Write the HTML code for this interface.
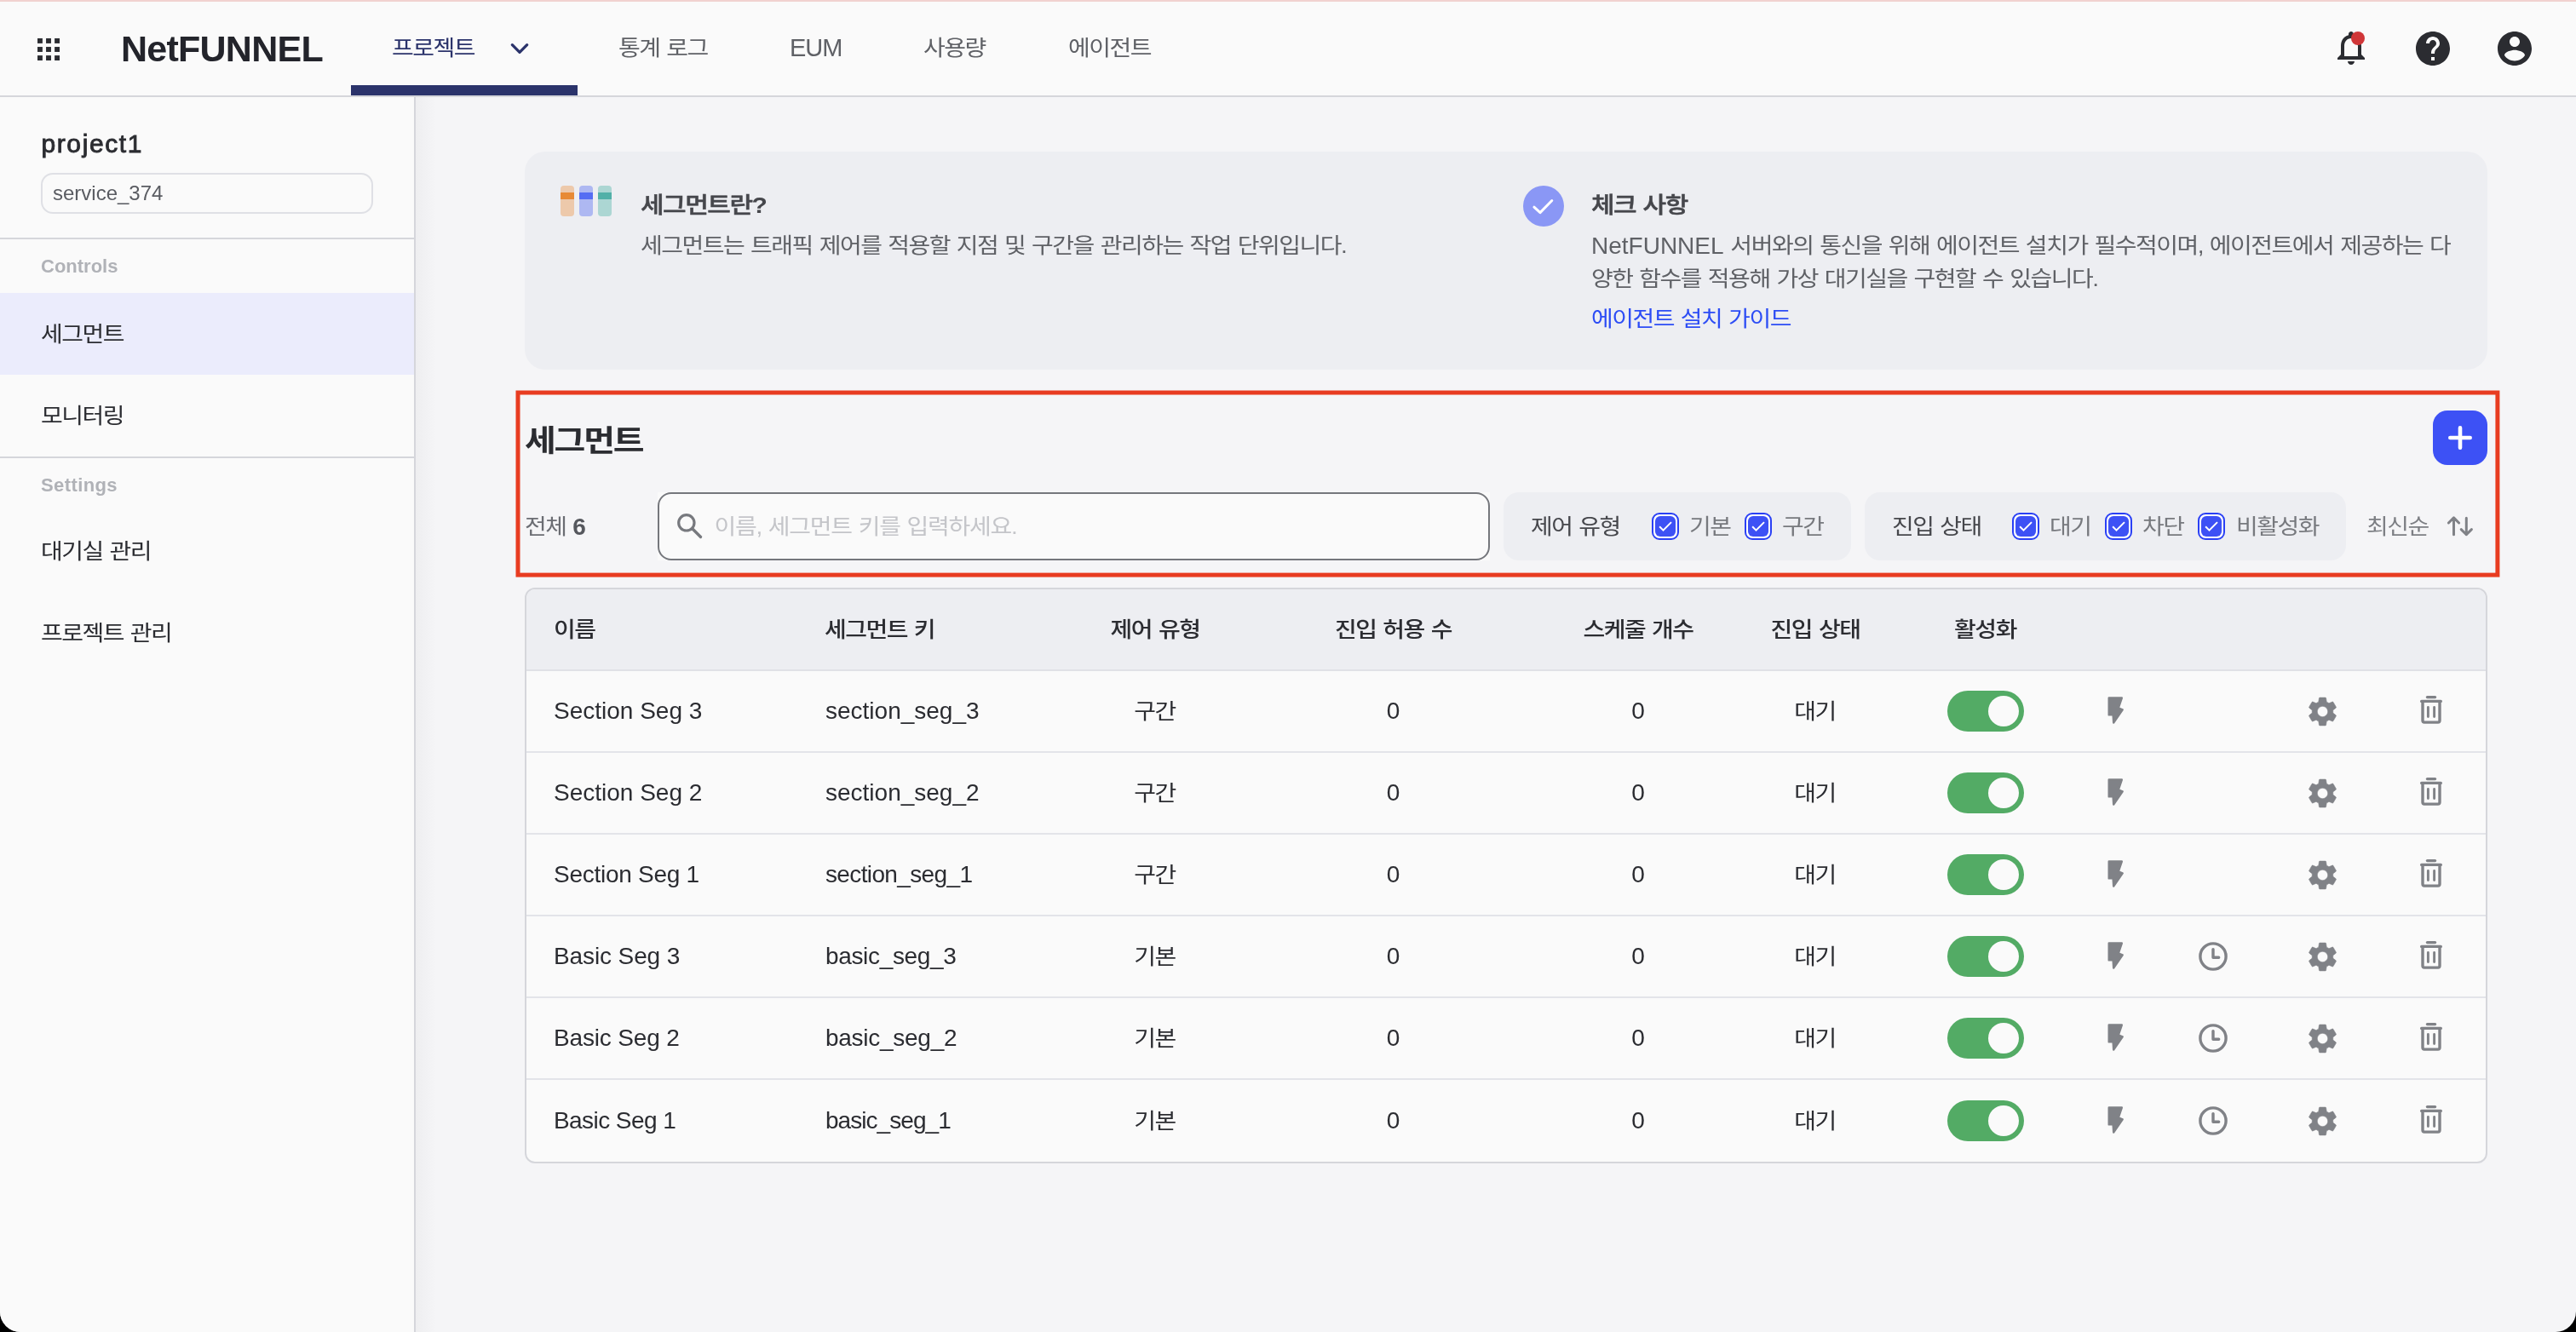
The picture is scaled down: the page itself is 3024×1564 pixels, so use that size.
<!DOCTYPE html>
<html lang="ko"><head><meta charset="utf-8"><title>NetFUNNEL - 세그먼트</title>
<style>
html,body{margin:0;padding:0;background:#000}
body{width:3024px;height:1564px;overflow:hidden;position:relative;background:#000;font-family:"Liberation Sans","Noto Sans CJK KR",sans-serif;-webkit-font-smoothing:antialiased}
.a{position:absolute}
.t{position:absolute;white-space:nowrap}
.k{transform:scaleY(.89);transform-origin:50% 50%}
.l{display:inline-block;transform:scaleY(1.1236);letter-spacing:0}
svg{position:absolute;display:block;overflow:visible}
@media (max-width:1600px){body{zoom:.5}}
#root{position:absolute;left:0;top:0;width:3024px;height:1564px;will-change:transform;background:#f5f5f7;border-radius:0 0 24px 24px;overflow:hidden}
</style></head><body><div id="root">

<div class="a" style="left:488px;top:114px;width:24px;height:1450px;background:linear-gradient(to right,#eeeef0,#f5f5f7)"></div>
<div class="a" style="left:0;top:0;width:3024px;height:112px;background:#fafafa;border-bottom:2px solid #d5d6db"></div>
<div class="a" style="left:0;top:0;width:3024px;height:2px;background:#f1d2d0"></div>
<svg style="left:44px;top:45px" width="26" height="26" viewBox="0 0 26 26"><rect x="0.0" y="0.0" width="5.9" height="5.9" fill="#2b2c31"/><rect x="10.05" y="0.0" width="5.9" height="5.9" fill="#2b2c31"/><rect x="20.1" y="0.0" width="5.9" height="5.9" fill="#2b2c31"/><rect x="0.0" y="10.05" width="5.9" height="5.9" fill="#2b2c31"/><rect x="10.05" y="10.05" width="5.9" height="5.9" fill="#2b2c31"/><rect x="20.1" y="10.05" width="5.9" height="5.9" fill="#2b2c31"/><rect x="0.0" y="20.1" width="5.9" height="5.9" fill="#2b2c31"/><rect x="10.05" y="20.1" width="5.9" height="5.9" fill="#2b2c31"/><rect x="20.1" y="20.1" width="5.9" height="5.9" fill="#2b2c31"/></svg>
<div class="t " style="left:142px;top:27.0px;font-size:43px;line-height:60px;color:#23242b;font-weight:700;letter-spacing:-0.75px;">NetFUNNEL</div>
<div class="t  k" style="left:460px;top:36.0px;font-size:28px;line-height:42px;color:#2b336b;font-weight:400;letter-spacing:-1.5px;">프로젝트</div>
<svg style="left:590px;top:37px" width="40" height="40" viewBox="0 0 24 24"><path fill="none" stroke="#2b336b" stroke-width="2" stroke-linecap="round" stroke-linejoin="round" d="M6.8 9.4 12 14.6l5.2-5.2"/></svg>
<div class="a" style="left:412px;top:100px;width:266px;height:12px;background:#2b336b"></div>
<div class="t  k" style="left:726px;top:36.0px;font-size:28px;line-height:42px;color:#5f6166;font-weight:400;letter-spacing:-1.5px;word-spacing:1.5px;">통계 로그</div>
<div class="t " style="left:927px;top:34.5px;font-size:29px;line-height:43px;color:#5f6166;font-weight:400;letter-spacing:-1px;">EUM</div>
<div class="t  k" style="left:1084px;top:36.0px;font-size:28px;line-height:42px;color:#5f6166;font-weight:400;letter-spacing:-1.5px;">사용량</div>
<div class="t  k" style="left:1254px;top:36.0px;font-size:28px;line-height:42px;color:#5f6166;font-weight:400;letter-spacing:-1.5px;">에이전트</div>
<svg style="left:2736px;top:32px" width="48" height="48" viewBox="0 0 24 24"><path fill="#2b2c31" d="M12 22c1.1 0 2-.9 2-2h-4c0 1.1.9 2 2 2zm6-6v-5c0-3.07-1.63-5.64-4.5-6.32V4c0-.83-.67-1.5-1.5-1.5s-1.5.67-1.5 1.5v.68C7.64 5.36 6 7.92 6 11v5l-2 2v1h16v-1l-2-2zm-2 1H8v-6c0-2.48 1.51-4.5 4-4.5s4 2.02 4 4.5v6z"/></svg>
<div class="a" style="left:2760px;top:37px;width:16px;height:16px;border-radius:50%;background:#d03638"></div>
<svg style="left:2832px;top:33px" width="48" height="48" viewBox="0 0 24 24"><path fill="#2b2c31" d="M12 2C6.48 2 2 6.48 2 12s4.48 10 10 10 10-4.48 10-10S17.52 2 12 2zm1 17h-2v-2h2v2zm2.07-7.75l-.9.92C13.45 12.9 13 13.5 13 15h-2v-.5c0-1.1.45-2.1 1.17-2.83l1.24-1.26c.37-.36.59-.86.59-1.41 0-1.1-.9-2-2-2s-2 .9-2 2H8c0-2.21 1.79-4 4-4s4 1.79 4 4c0 .88-.36 1.68-.93 2.25z"/></svg>
<svg style="left:2928px;top:33px" width="48" height="48" viewBox="0 0 24 24"><path fill="#2b2c31" d="M12 2C6.48 2 2 6.48 2 12s4.48 10 10 10 10-4.48 10-10S17.52 2 12 2zm0 3c1.66 0 3 1.34 3 3s-1.34 3-3 3-3-1.34-3-3 1.34-3 3-3zm0 14.2c-2.5 0-4.71-1.28-6-3.22.03-1.99 4-3.08 6-3.08 1.99 0 5.97 1.09 6 3.08-1.29 1.94-3.5 3.22-6 3.22z"/></svg>
<div class="a" style="left:0;top:114px;width:486px;height:1450px;background:#fafafa;border-right:2px solid #d5d6db"></div>
<div class="t " style="left:48.5px;top:147.0px;font-size:30px;line-height:44px;color:#2b2c31;font-weight:400;letter-spacing:1.6px;-webkit-text-stroke:.9px #2b2c31;">project1</div>
<div class="a" style="left:48px;top:203px;width:386px;height:44px;border:2px solid #dfe0e5;border-radius:14px;background:#fafafa"></div>
<div class="t " style="left:62px;top:209.0px;font-size:24px;line-height:36px;color:#5a5c62;font-weight:400;">service_374</div>
<div class="a" style="left:0;top:279px;width:486px;height:2px;background:#d5d6db"></div>
<div class="t " style="left:48px;top:297.0px;font-size:22px;line-height:32px;color:#b0b2b7;font-weight:700;">Controls</div>
<div class="a" style="left:0;top:344px;width:486px;height:96px;background:#ebecfc"></div>
<div class="t  k" style="left:48px;top:372.0px;font-size:28px;line-height:42px;color:#2b2c31;font-weight:400;letter-spacing:-1.5px;">세그먼트</div>
<div class="t  k" style="left:48px;top:468.0px;font-size:28px;line-height:42px;color:#2b2c31;font-weight:400;letter-spacing:-1.5px;">모니터링</div>
<div class="a" style="left:0;top:536px;width:486px;height:2px;background:#d5d6db"></div>
<div class="t " style="left:48px;top:554.0px;font-size:22px;line-height:32px;color:#b0b2b7;font-weight:700;letter-spacing:0.4px;">Settings</div>
<div class="t  k" style="left:48px;top:627.0px;font-size:28px;line-height:42px;color:#2b2c31;font-weight:400;letter-spacing:-1.5px;word-spacing:1.5px;">대기실 관리</div>
<div class="t  k" style="left:48px;top:723.0px;font-size:28px;line-height:42px;color:#2b2c31;font-weight:400;letter-spacing:-1.5px;word-spacing:1.5px;">프로젝트 관리</div>
<div class="a" style="left:616px;top:178px;width:2304px;height:256px;background:#edeef2;border-radius:24px"></div>
<div class="a" style="left:658px;top:218px;width:16px;height:36px;border-radius:4px;background:#edc9ab;overflow:hidden"><div class="a" style="left:0;top:8px;width:16px;height:8px;background:#e78a35"></div></div>
<div class="a" style="left:680px;top:218px;width:16px;height:36px;border-radius:4px;background:#aeb8f2;overflow:hidden"><div class="a" style="left:0;top:8px;width:16px;height:8px;background:#556df3"></div></div>
<div class="a" style="left:702px;top:218px;width:16px;height:36px;border-radius:4px;background:#acd6d3;overflow:hidden"><div class="a" style="left:0;top:8px;width:16px;height:8px;background:#52b0a8"></div></div>
<div class="t  k" style="left:752px;top:217.5px;font-size:30px;line-height:45px;color:#46474c;font-weight:500;letter-spacing:-1.5px;-webkit-text-stroke:.55px #46474c;">세그먼트란<b style="-webkit-text-stroke:0">?</b></div>
<div class="t  k" style="left:752px;top:268.0px;font-size:28px;line-height:42px;color:#5f6166;font-weight:400;letter-spacing:-1.5px;word-spacing:1.5px;">세그먼트는 트래픽 제어를 적용할 지점 및 구간을 관리하는 작업 단위입니다.</div>
<div class="a" style="left:1788px;top:218px;width:48px;height:48px;border-radius:50%;background:#8a97f5"></div>
<svg style="left:1788px;top:218px" width="48" height="48" viewBox="0 0 48 48"><path fill="none" stroke="#fff" stroke-width="3" stroke-linecap="round" stroke-linejoin="round" d="M12.9 25.2l7.1 6.4L33.8 17.5"/></svg>
<div class="t  k" style="left:1868px;top:217.5px;font-size:30px;line-height:45px;color:#46474c;font-weight:500;letter-spacing:-1.5px;word-spacing:1.5px;-webkit-text-stroke:.55px #46474c;">체크 사항</div>
<div class="t  k" style="left:1868px;top:268.0px;font-size:28px;line-height:42px;color:#5f6166;font-weight:400;letter-spacing:-1.5px;word-spacing:1.5px;"><span class="l">NetFUNNEL</span> 서버와의 통신을 위해 에이전트 설치가 필수적이며, 에이전트에서 제공하는 다</div>
<div class="t  k" style="left:1868px;top:306.5px;font-size:28px;line-height:42px;color:#5f6166;font-weight:400;letter-spacing:-1.5px;word-spacing:1.5px;">양한 함수를 적용해 가상 대기실을 구현할 수 있습니다.</div>
<div class="t  k" style="left:1868px;top:353.5px;font-size:28px;line-height:42px;color:#2d4df5;font-weight:400;letter-spacing:-1.5px;word-spacing:1.5px;">에이전트 설치 가이드</div>
<svg style="left:600px;top:450px" width="2340" height="235" viewBox="600 450 2340 235"><rect x="608" y="461" width="2323.9" height="214.1" fill="none" stroke="#e83c21" stroke-width="5"/></svg>
<div class="t  k" style="left:616px;top:488.0px;font-size:40px;line-height:60px;color:#2b2c31;font-weight:700;letter-spacing:-2.2px;">세그먼트</div>
<div class="a" style="left:2856px;top:482px;width:64px;height:64px;border-radius:17px;background:#3d51f5"></div>
<svg style="left:2856px;top:482px" width="64" height="64" viewBox="0 0 64 64"><path fill="none" stroke="#fff" stroke-width="4.6" stroke-linecap="round" d="M20.3 32h23.4M32 20.3v23.4"/></svg>
<div class="t  k" style="left:616px;top:598.0px;font-size:28px;line-height:42px;color:#6b6d73;font-weight:400;letter-spacing:-1.5px;word-spacing:1.5px;">전체 <b class="l" style="color:#55575d">6</b></div>
<div class="a" style="left:772px;top:578px;width:977px;height:80px;background:#fafafa"></div>
<div class="a" style="left:772px;top:578px;width:973px;height:76px;border:2px solid #75777c;border-radius:16px;background:#fafafa"></div>
<svg style="left:790px;top:598px" width="40" height="40" viewBox="0 0 24 24"><circle cx="9.5" cy="9.5" r="5.5" fill="none" stroke="#77797e" stroke-width="1.9"/><path d="M13.8 13.8l5.7 5.7" stroke="#77797e" stroke-width="2" stroke-linecap="round"/></svg>
<div class="t  k" style="left:838.5px;top:598.0px;font-size:28px;line-height:42px;color:#c4c5c9;font-weight:400;letter-spacing:-1.25px;word-spacing:1.25px;">이름, 세그먼트 키를 입력하세요.</div>
<div class="a" style="left:1765px;top:578px;width:408px;height:80px;border-radius:18px;background:#edeef2"></div>
<div class="t  k" style="left:1797px;top:598.0px;font-size:28px;line-height:42px;color:#46474c;font-weight:400;letter-spacing:-1.5px;word-spacing:1.5px;">제어 유형</div>
<div class="a" style="left:1939px;top:602px;width:28px;height:28px;border:2px solid #2a40f5;border-radius:9px;background:#fff"></div><div class="a" style="left:1943px;top:606px;width:24px;height:24px;border-radius:6px;background:#3d51f5"></div><svg style="left:1939px;top:602px" width="32" height="32" viewBox="0 0 32 32"><path fill="none" stroke="#fff" stroke-width="2" d="M9.1 16.2l4.4 4.4L23 11.1"/></svg>
<div class="t  k" style="left:1983px;top:598.0px;font-size:28px;line-height:42px;color:#77797e;font-weight:400;letter-spacing:-1.5px;">기본</div>
<div class="a" style="left:2048px;top:602px;width:28px;height:28px;border:2px solid #2a40f5;border-radius:9px;background:#fff"></div><div class="a" style="left:2052px;top:606px;width:24px;height:24px;border-radius:6px;background:#3d51f5"></div><svg style="left:2048px;top:602px" width="32" height="32" viewBox="0 0 32 32"><path fill="none" stroke="#fff" stroke-width="2" d="M9.1 16.2l4.4 4.4L23 11.1"/></svg>
<div class="t  k" style="left:2092px;top:598.0px;font-size:28px;line-height:42px;color:#77797e;font-weight:400;letter-spacing:-1.5px;">구간</div>
<div class="a" style="left:2189px;top:578px;width:565px;height:80px;border-radius:18px;background:#edeef2"></div>
<div class="t  k" style="left:2221px;top:598.0px;font-size:28px;line-height:42px;color:#46474c;font-weight:400;letter-spacing:-1.5px;word-spacing:1.5px;">진입 상태</div>
<div class="a" style="left:2362px;top:602px;width:28px;height:28px;border:2px solid #2a40f5;border-radius:9px;background:#fff"></div><div class="a" style="left:2366px;top:606px;width:24px;height:24px;border-radius:6px;background:#3d51f5"></div><svg style="left:2362px;top:602px" width="32" height="32" viewBox="0 0 32 32"><path fill="none" stroke="#fff" stroke-width="2" d="M9.1 16.2l4.4 4.4L23 11.1"/></svg>
<div class="t  k" style="left:2406px;top:598.0px;font-size:28px;line-height:42px;color:#77797e;font-weight:400;letter-spacing:-1.5px;">대기</div>
<div class="a" style="left:2471px;top:602px;width:28px;height:28px;border:2px solid #2a40f5;border-radius:9px;background:#fff"></div><div class="a" style="left:2475px;top:606px;width:24px;height:24px;border-radius:6px;background:#3d51f5"></div><svg style="left:2471px;top:602px" width="32" height="32" viewBox="0 0 32 32"><path fill="none" stroke="#fff" stroke-width="2" d="M9.1 16.2l4.4 4.4L23 11.1"/></svg>
<div class="t  k" style="left:2515px;top:598.0px;font-size:28px;line-height:42px;color:#77797e;font-weight:400;letter-spacing:-1.5px;">차단</div>
<div class="a" style="left:2580px;top:602px;width:28px;height:28px;border:2px solid #2a40f5;border-radius:9px;background:#fff"></div><div class="a" style="left:2584px;top:606px;width:24px;height:24px;border-radius:6px;background:#3d51f5"></div><svg style="left:2580px;top:602px" width="32" height="32" viewBox="0 0 32 32"><path fill="none" stroke="#fff" stroke-width="2" d="M9.1 16.2l4.4 4.4L23 11.1"/></svg>
<div class="t  k" style="left:2625px;top:598.0px;font-size:28px;line-height:42px;color:#77797e;font-weight:400;letter-spacing:-1.5px;">비활성화</div>
<div class="t  k" style="left:2778px;top:598.0px;font-size:28px;line-height:42px;color:#7d7f84;font-weight:400;letter-spacing:-1.5px;">최신순</div>
<svg style="left:2868px;top:598px" width="40" height="40" viewBox="0 0 40 40"><path fill="none" stroke="#808287" stroke-width="3" stroke-linecap="round" stroke-linejoin="round" d="M6.4 16l6.1-6.1 6.1 6.1M12.5 9.9v19.8M21.2 23.6l6.1 6.1 6.1-6.1M27.3 29.7V10.2"/></svg>
<div class="a" style="left:616px;top:690px;width:2300px;height:672px;border:2px solid #d5d6db;border-radius:12px;background:#fafafa;overflow:hidden"><div class="a" style="left:0;top:0;width:2300px;height:94px;background:#edeef2;border-bottom:2px solid #e0e1e6"></div><div class="a" style="left:0;top:190px;width:2300px;height:2px;background:#e3e4e9"></div><div class="a" style="left:0;top:286px;width:2300px;height:2px;background:#e3e4e9"></div><div class="a" style="left:0;top:382px;width:2300px;height:2px;background:#e3e4e9"></div><div class="a" style="left:0;top:478px;width:2300px;height:2px;background:#e3e4e9"></div><div class="a" style="left:0;top:574px;width:2300px;height:2px;background:#e3e4e9"></div></div>
<div class="t  k" style="left:650px;top:719.0px;font-size:28px;line-height:42px;color:#2b2c31;font-weight:500;letter-spacing:-1.5px;">이름</div>
<div class="t  k" style="left:968px;top:719.0px;font-size:28px;line-height:42px;color:#2b2c31;font-weight:500;letter-spacing:-1.5px;word-spacing:1.5px;">세그먼트 키</div>
<div class="t  k" style="left:1056px;top:719.0px;font-size:28px;line-height:42px;color:#2b2c31;font-weight:500;letter-spacing:-1.5px;word-spacing:1.5px;width:600px;text-align:center;">제어 유형</div>
<div class="t  k" style="left:1335.5px;top:719.0px;font-size:28px;line-height:42px;color:#2b2c31;font-weight:500;letter-spacing:-1.5px;word-spacing:1.5px;width:600px;text-align:center;">진입 허용 수</div>
<div class="t  k" style="left:1623px;top:719.0px;font-size:28px;line-height:42px;color:#2b2c31;font-weight:500;letter-spacing:-1.5px;word-spacing:1.5px;width:600px;text-align:center;">스케줄 개수</div>
<div class="t  k" style="left:1831px;top:719.0px;font-size:28px;line-height:42px;color:#2b2c31;font-weight:500;letter-spacing:-1.5px;word-spacing:1.5px;width:600px;text-align:center;">진입 상태</div>
<div class="t  k" style="left:2030.5px;top:719.0px;font-size:28px;line-height:42px;color:#2b2c31;font-weight:500;letter-spacing:-1.5px;width:600px;text-align:center;">활성화</div>
<div class="t " style="left:650px;top:814.0px;font-size:28px;line-height:42px;color:#2b2c31;font-weight:400;">Section Seg 3</div>
<div class="t " style="left:969px;top:814.0px;font-size:28px;line-height:42px;color:#2b2c31;font-weight:400;">section_seg_3</div>
<div class="t  k" style="left:1055.5px;top:815.0px;font-size:28px;line-height:42px;color:#2b2c31;font-weight:400;letter-spacing:-1.5px;width:600px;text-align:center;">구간</div>
<div class="t " style="left:1335.5px;top:814.0px;font-size:28px;line-height:42px;color:#2b2c31;font-weight:400;width:600px;text-align:center;">0</div>
<div class="t " style="left:1623px;top:814.0px;font-size:28px;line-height:42px;color:#2b2c31;font-weight:400;width:600px;text-align:center;">0</div>
<div class="t  k" style="left:1830.5px;top:815.0px;font-size:28px;line-height:42px;color:#2b2c31;font-weight:400;letter-spacing:-1.5px;width:600px;text-align:center;">대기</div>
<div class="a" style="left:2286px;top:811px;width:90px;height:48px;border-radius:24px;background:#53ab65"><div class="a" style="left:48px;top:6px;width:36px;height:36px;border-radius:50%;background:#fafafa"></div></div>
<svg style="left:2474px;top:818px" width="20" height="33" viewBox="0 0 20 33"><path fill="#808287" stroke="#808287" stroke-width="2.4" stroke-linejoin="round" d="M1.7 1.5h15.1l-4 11.9 4.9 1.9L7.2 30.6l-.6-9.2H1.7z"/></svg>
<svg style="left:2705.5px;top:814.5px" width="41" height="41" viewBox="0 0 24 24"><path fill="#808287" stroke="#808287" stroke-width=".35" stroke-linejoin="round" d="M19.14 12.94c.04-.3.06-.61.06-.94 0-.32-.02-.64-.07-.94l2.03-1.58c.18-.14.23-.41.12-.61l-1.92-3.32c-.12-.22-.37-.29-.59-.22l-2.39.96c-.5-.38-1.03-.7-1.62-.94l-.36-2.54c-.04-.24-.24-.41-.48-.41h-3.84c-.24 0-.43.17-.47.41l-.36 2.54c-.59.24-1.13.57-1.62.94l-2.39-.96c-.22-.08-.47 0-.59.22L2.74 8.87c-.12.21-.08.47.12.61l2.03 1.58c-.05.3-.09.63-.09.94s.02.64.07.94l-2.03 1.58c-.18.14-.23.41-.12.61l1.92 3.32c.12.22.37.29.59.22l2.39-.96c.5.38 1.03.7 1.62.94l.36 2.54c.05.24.24.41.48.41h3.84c.24 0 .44-.17.47-.41l.36-2.54c.59-.24 1.13-.56 1.62-.94l2.39.96c.22.08.47 0 .59-.22l1.92-3.32c.12-.22.07-.47-.12-.61l-2.01-1.58zM12 15.6c-1.98 0-3.6-1.62-3.6-3.6s1.62-3.6 3.6-3.6 3.6 1.62 3.6 3.6-1.62 3.6-3.6 3.6z"/></svg>
<svg style="left:2834px;top:815px" width="40" height="40" viewBox="0 0 40 40"><g fill="none" stroke="#808287" stroke-linecap="round" stroke-linejoin="round"><path stroke-width="3.2" d="M15.4 3.6h9.2"/><path stroke-width="3.2" d="M8.6 8.4h22.8"/><path stroke-width="3.4" d="M10 9.5v21.6a2 2 0 0 0 2 2h16a2 2 0 0 0 2-2V9.5"/><path stroke-width="2.9" d="M16.4 15.4v11.2M23.6 15.4v11.2"/></g></svg>
<div class="t " style="left:650px;top:910.0px;font-size:28px;line-height:42px;color:#2b2c31;font-weight:400;">Section Seg 2</div>
<div class="t " style="left:969px;top:910.0px;font-size:28px;line-height:42px;color:#2b2c31;font-weight:400;">section_seg_2</div>
<div class="t  k" style="left:1055.5px;top:911.0px;font-size:28px;line-height:42px;color:#2b2c31;font-weight:400;letter-spacing:-1.5px;width:600px;text-align:center;">구간</div>
<div class="t " style="left:1335.5px;top:910.0px;font-size:28px;line-height:42px;color:#2b2c31;font-weight:400;width:600px;text-align:center;">0</div>
<div class="t " style="left:1623px;top:910.0px;font-size:28px;line-height:42px;color:#2b2c31;font-weight:400;width:600px;text-align:center;">0</div>
<div class="t  k" style="left:1830.5px;top:911.0px;font-size:28px;line-height:42px;color:#2b2c31;font-weight:400;letter-spacing:-1.5px;width:600px;text-align:center;">대기</div>
<div class="a" style="left:2286px;top:907px;width:90px;height:48px;border-radius:24px;background:#53ab65"><div class="a" style="left:48px;top:6px;width:36px;height:36px;border-radius:50%;background:#fafafa"></div></div>
<svg style="left:2474px;top:914px" width="20" height="33" viewBox="0 0 20 33"><path fill="#808287" stroke="#808287" stroke-width="2.4" stroke-linejoin="round" d="M1.7 1.5h15.1l-4 11.9 4.9 1.9L7.2 30.6l-.6-9.2H1.7z"/></svg>
<svg style="left:2705.5px;top:910.5px" width="41" height="41" viewBox="0 0 24 24"><path fill="#808287" stroke="#808287" stroke-width=".35" stroke-linejoin="round" d="M19.14 12.94c.04-.3.06-.61.06-.94 0-.32-.02-.64-.07-.94l2.03-1.58c.18-.14.23-.41.12-.61l-1.92-3.32c-.12-.22-.37-.29-.59-.22l-2.39.96c-.5-.38-1.03-.7-1.62-.94l-.36-2.54c-.04-.24-.24-.41-.48-.41h-3.84c-.24 0-.43.17-.47.41l-.36 2.54c-.59.24-1.13.57-1.62.94l-2.39-.96c-.22-.08-.47 0-.59.22L2.74 8.87c-.12.21-.08.47.12.61l2.03 1.58c-.05.3-.09.63-.09.94s.02.64.07.94l-2.03 1.58c-.18.14-.23.41-.12.61l1.92 3.32c.12.22.37.29.59.22l2.39-.96c.5.38 1.03.7 1.62.94l.36 2.54c.05.24.24.41.48.41h3.84c.24 0 .44-.17.47-.41l.36-2.54c.59-.24 1.13-.56 1.62-.94l2.39.96c.22.08.47 0 .59-.22l1.92-3.32c.12-.22.07-.47-.12-.61l-2.01-1.58zM12 15.6c-1.98 0-3.6-1.62-3.6-3.6s1.62-3.6 3.6-3.6 3.6 1.62 3.6 3.6-1.62 3.6-3.6 3.6z"/></svg>
<svg style="left:2834px;top:911px" width="40" height="40" viewBox="0 0 40 40"><g fill="none" stroke="#808287" stroke-linecap="round" stroke-linejoin="round"><path stroke-width="3.2" d="M15.4 3.6h9.2"/><path stroke-width="3.2" d="M8.6 8.4h22.8"/><path stroke-width="3.4" d="M10 9.5v21.6a2 2 0 0 0 2 2h16a2 2 0 0 0 2-2V9.5"/><path stroke-width="2.9" d="M16.4 15.4v11.2M23.6 15.4v11.2"/></g></svg>
<div class="t " style="left:650px;top:1006.0px;font-size:28px;line-height:42px;color:#2b2c31;font-weight:400;letter-spacing:-0.27px;">Section Seg 1</div>
<div class="t " style="left:969px;top:1006.0px;font-size:28px;line-height:42px;color:#2b2c31;font-weight:400;letter-spacing:-0.63px;">section_seg_1</div>
<div class="t  k" style="left:1055.5px;top:1007.0px;font-size:28px;line-height:42px;color:#2b2c31;font-weight:400;letter-spacing:-1.5px;width:600px;text-align:center;">구간</div>
<div class="t " style="left:1335.5px;top:1006.0px;font-size:28px;line-height:42px;color:#2b2c31;font-weight:400;width:600px;text-align:center;">0</div>
<div class="t " style="left:1623px;top:1006.0px;font-size:28px;line-height:42px;color:#2b2c31;font-weight:400;width:600px;text-align:center;">0</div>
<div class="t  k" style="left:1830.5px;top:1007.0px;font-size:28px;line-height:42px;color:#2b2c31;font-weight:400;letter-spacing:-1.5px;width:600px;text-align:center;">대기</div>
<div class="a" style="left:2286px;top:1003px;width:90px;height:48px;border-radius:24px;background:#53ab65"><div class="a" style="left:48px;top:6px;width:36px;height:36px;border-radius:50%;background:#fafafa"></div></div>
<svg style="left:2474px;top:1010px" width="20" height="33" viewBox="0 0 20 33"><path fill="#808287" stroke="#808287" stroke-width="2.4" stroke-linejoin="round" d="M1.7 1.5h15.1l-4 11.9 4.9 1.9L7.2 30.6l-.6-9.2H1.7z"/></svg>
<svg style="left:2705.5px;top:1006.5px" width="41" height="41" viewBox="0 0 24 24"><path fill="#808287" stroke="#808287" stroke-width=".35" stroke-linejoin="round" d="M19.14 12.94c.04-.3.06-.61.06-.94 0-.32-.02-.64-.07-.94l2.03-1.58c.18-.14.23-.41.12-.61l-1.92-3.32c-.12-.22-.37-.29-.59-.22l-2.39.96c-.5-.38-1.03-.7-1.62-.94l-.36-2.54c-.04-.24-.24-.41-.48-.41h-3.84c-.24 0-.43.17-.47.41l-.36 2.54c-.59.24-1.13.57-1.62.94l-2.39-.96c-.22-.08-.47 0-.59.22L2.74 8.87c-.12.21-.08.47.12.61l2.03 1.58c-.05.3-.09.63-.09.94s.02.64.07.94l-2.03 1.58c-.18.14-.23.41-.12.61l1.92 3.32c.12.22.37.29.59.22l2.39-.96c.5.38 1.03.7 1.62.94l.36 2.54c.05.24.24.41.48.41h3.84c.24 0 .44-.17.47-.41l.36-2.54c.59-.24 1.13-.56 1.62-.94l2.39.96c.22.08.47 0 .59-.22l1.92-3.32c.12-.22.07-.47-.12-.61l-2.01-1.58zM12 15.6c-1.98 0-3.6-1.62-3.6-3.6s1.62-3.6 3.6-3.6 3.6 1.62 3.6 3.6-1.62 3.6-3.6 3.6z"/></svg>
<svg style="left:2834px;top:1007px" width="40" height="40" viewBox="0 0 40 40"><g fill="none" stroke="#808287" stroke-linecap="round" stroke-linejoin="round"><path stroke-width="3.2" d="M15.4 3.6h9.2"/><path stroke-width="3.2" d="M8.6 8.4h22.8"/><path stroke-width="3.4" d="M10 9.5v21.6a2 2 0 0 0 2 2h16a2 2 0 0 0 2-2V9.5"/><path stroke-width="2.9" d="M16.4 15.4v11.2M23.6 15.4v11.2"/></g></svg>
<div class="t " style="left:650px;top:1102.0px;font-size:28px;line-height:42px;color:#2b2c31;font-weight:400;letter-spacing:-0.11px;">Basic Seg 3</div>
<div class="t " style="left:969px;top:1102.0px;font-size:28px;line-height:42px;color:#2b2c31;font-weight:400;letter-spacing:-0.34px;">basic_seg_3</div>
<div class="t  k" style="left:1055.5px;top:1103.0px;font-size:28px;line-height:42px;color:#2b2c31;font-weight:400;letter-spacing:-1.5px;width:600px;text-align:center;">기본</div>
<div class="t " style="left:1335.5px;top:1102.0px;font-size:28px;line-height:42px;color:#2b2c31;font-weight:400;width:600px;text-align:center;">0</div>
<div class="t " style="left:1623px;top:1102.0px;font-size:28px;line-height:42px;color:#2b2c31;font-weight:400;width:600px;text-align:center;">0</div>
<div class="t  k" style="left:1830.5px;top:1103.0px;font-size:28px;line-height:42px;color:#2b2c31;font-weight:400;letter-spacing:-1.5px;width:600px;text-align:center;">대기</div>
<div class="a" style="left:2286px;top:1099px;width:90px;height:48px;border-radius:24px;background:#53ab65"><div class="a" style="left:48px;top:6px;width:36px;height:36px;border-radius:50%;background:#fafafa"></div></div>
<svg style="left:2474px;top:1106px" width="20" height="33" viewBox="0 0 20 33"><path fill="#808287" stroke="#808287" stroke-width="2.4" stroke-linejoin="round" d="M1.7 1.5h15.1l-4 11.9 4.9 1.9L7.2 30.6l-.6-9.2H1.7z"/></svg>
<svg style="left:2578px;top:1103px" width="40" height="40" viewBox="0 0 40 40"><circle cx="20" cy="20" r="15.1" fill="none" stroke="#808287" stroke-width="3.4"/><path fill="none" stroke="#808287" stroke-width="3.4" stroke-linecap="round" stroke-linejoin="round" d="M20 11.6V21.3h6.7"/></svg>
<svg style="left:2705.5px;top:1102.5px" width="41" height="41" viewBox="0 0 24 24"><path fill="#808287" stroke="#808287" stroke-width=".35" stroke-linejoin="round" d="M19.14 12.94c.04-.3.06-.61.06-.94 0-.32-.02-.64-.07-.94l2.03-1.58c.18-.14.23-.41.12-.61l-1.92-3.32c-.12-.22-.37-.29-.59-.22l-2.39.96c-.5-.38-1.03-.7-1.62-.94l-.36-2.54c-.04-.24-.24-.41-.48-.41h-3.84c-.24 0-.43.17-.47.41l-.36 2.54c-.59.24-1.13.57-1.62.94l-2.39-.96c-.22-.08-.47 0-.59.22L2.74 8.87c-.12.21-.08.47.12.61l2.03 1.58c-.05.3-.09.63-.09.94s.02.64.07.94l-2.03 1.58c-.18.14-.23.41-.12.61l1.92 3.32c.12.22.37.29.59.22l2.39-.96c.5.38 1.03.7 1.62.94l.36 2.54c.05.24.24.41.48.41h3.84c.24 0 .44-.17.47-.41l.36-2.54c.59-.24 1.13-.56 1.62-.94l2.39.96c.22.08.47 0 .59-.22l1.92-3.32c.12-.22.07-.47-.12-.61l-2.01-1.58zM12 15.6c-1.98 0-3.6-1.62-3.6-3.6s1.62-3.6 3.6-3.6 3.6 1.62 3.6 3.6-1.62 3.6-3.6 3.6z"/></svg>
<svg style="left:2834px;top:1103px" width="40" height="40" viewBox="0 0 40 40"><g fill="none" stroke="#808287" stroke-linecap="round" stroke-linejoin="round"><path stroke-width="3.2" d="M15.4 3.6h9.2"/><path stroke-width="3.2" d="M8.6 8.4h22.8"/><path stroke-width="3.4" d="M10 9.5v21.6a2 2 0 0 0 2 2h16a2 2 0 0 0 2-2V9.5"/><path stroke-width="2.9" d="M16.4 15.4v11.2M23.6 15.4v11.2"/></g></svg>
<div class="t " style="left:650px;top:1198.0px;font-size:28px;line-height:42px;color:#2b2c31;font-weight:400;letter-spacing:-0.15px;">Basic Seg 2</div>
<div class="t " style="left:969px;top:1198.0px;font-size:28px;line-height:42px;color:#2b2c31;font-weight:400;letter-spacing:-0.27px;">basic_seg_2</div>
<div class="t  k" style="left:1055.5px;top:1199.0px;font-size:28px;line-height:42px;color:#2b2c31;font-weight:400;letter-spacing:-1.5px;width:600px;text-align:center;">기본</div>
<div class="t " style="left:1335.5px;top:1198.0px;font-size:28px;line-height:42px;color:#2b2c31;font-weight:400;width:600px;text-align:center;">0</div>
<div class="t " style="left:1623px;top:1198.0px;font-size:28px;line-height:42px;color:#2b2c31;font-weight:400;width:600px;text-align:center;">0</div>
<div class="t  k" style="left:1830.5px;top:1199.0px;font-size:28px;line-height:42px;color:#2b2c31;font-weight:400;letter-spacing:-1.5px;width:600px;text-align:center;">대기</div>
<div class="a" style="left:2286px;top:1195px;width:90px;height:48px;border-radius:24px;background:#53ab65"><div class="a" style="left:48px;top:6px;width:36px;height:36px;border-radius:50%;background:#fafafa"></div></div>
<svg style="left:2474px;top:1202px" width="20" height="33" viewBox="0 0 20 33"><path fill="#808287" stroke="#808287" stroke-width="2.4" stroke-linejoin="round" d="M1.7 1.5h15.1l-4 11.9 4.9 1.9L7.2 30.6l-.6-9.2H1.7z"/></svg>
<svg style="left:2578px;top:1199px" width="40" height="40" viewBox="0 0 40 40"><circle cx="20" cy="20" r="15.1" fill="none" stroke="#808287" stroke-width="3.4"/><path fill="none" stroke="#808287" stroke-width="3.4" stroke-linecap="round" stroke-linejoin="round" d="M20 11.6V21.3h6.7"/></svg>
<svg style="left:2705.5px;top:1198.5px" width="41" height="41" viewBox="0 0 24 24"><path fill="#808287" stroke="#808287" stroke-width=".35" stroke-linejoin="round" d="M19.14 12.94c.04-.3.06-.61.06-.94 0-.32-.02-.64-.07-.94l2.03-1.58c.18-.14.23-.41.12-.61l-1.92-3.32c-.12-.22-.37-.29-.59-.22l-2.39.96c-.5-.38-1.03-.7-1.62-.94l-.36-2.54c-.04-.24-.24-.41-.48-.41h-3.84c-.24 0-.43.17-.47.41l-.36 2.54c-.59.24-1.13.57-1.62.94l-2.39-.96c-.22-.08-.47 0-.59.22L2.74 8.87c-.12.21-.08.47.12.61l2.03 1.58c-.05.3-.09.63-.09.94s.02.64.07.94l-2.03 1.58c-.18.14-.23.41-.12.61l1.92 3.32c.12.22.37.29.59.22l2.39-.96c.5.38 1.03.7 1.62.94l.36 2.54c.05.24.24.41.48.41h3.84c.24 0 .44-.17.47-.41l.36-2.54c.59-.24 1.13-.56 1.62-.94l2.39.96c.22.08.47 0 .59-.22l1.92-3.32c.12-.22.07-.47-.12-.61l-2.01-1.58zM12 15.6c-1.98 0-3.6-1.62-3.6-3.6s1.62-3.6 3.6-3.6 3.6 1.62 3.6 3.6-1.62 3.6-3.6 3.6z"/></svg>
<svg style="left:2834px;top:1199px" width="40" height="40" viewBox="0 0 40 40"><g fill="none" stroke="#808287" stroke-linecap="round" stroke-linejoin="round"><path stroke-width="3.2" d="M15.4 3.6h9.2"/><path stroke-width="3.2" d="M8.6 8.4h22.8"/><path stroke-width="3.4" d="M10 9.5v21.6a2 2 0 0 0 2 2h16a2 2 0 0 0 2-2V9.5"/><path stroke-width="2.9" d="M16.4 15.4v11.2M23.6 15.4v11.2"/></g></svg>
<div class="t " style="left:650px;top:1295.0px;font-size:28px;line-height:42px;color:#2b2c31;font-weight:400;letter-spacing:-0.57px;">Basic Seg 1</div>
<div class="t " style="left:969px;top:1295.0px;font-size:28px;line-height:42px;color:#2b2c31;font-weight:400;letter-spacing:-0.95px;">basic_seg_1</div>
<div class="t  k" style="left:1055.5px;top:1296.0px;font-size:28px;line-height:42px;color:#2b2c31;font-weight:400;letter-spacing:-1.5px;width:600px;text-align:center;">기본</div>
<div class="t " style="left:1335.5px;top:1295.0px;font-size:28px;line-height:42px;color:#2b2c31;font-weight:400;width:600px;text-align:center;">0</div>
<div class="t " style="left:1623px;top:1295.0px;font-size:28px;line-height:42px;color:#2b2c31;font-weight:400;width:600px;text-align:center;">0</div>
<div class="t  k" style="left:1830.5px;top:1296.0px;font-size:28px;line-height:42px;color:#2b2c31;font-weight:400;letter-spacing:-1.5px;width:600px;text-align:center;">대기</div>
<div class="a" style="left:2286px;top:1292px;width:90px;height:48px;border-radius:24px;background:#53ab65"><div class="a" style="left:48px;top:6px;width:36px;height:36px;border-radius:50%;background:#fafafa"></div></div>
<svg style="left:2474px;top:1299px" width="20" height="33" viewBox="0 0 20 33"><path fill="#808287" stroke="#808287" stroke-width="2.4" stroke-linejoin="round" d="M1.7 1.5h15.1l-4 11.9 4.9 1.9L7.2 30.6l-.6-9.2H1.7z"/></svg>
<svg style="left:2578px;top:1296px" width="40" height="40" viewBox="0 0 40 40"><circle cx="20" cy="20" r="15.1" fill="none" stroke="#808287" stroke-width="3.4"/><path fill="none" stroke="#808287" stroke-width="3.4" stroke-linecap="round" stroke-linejoin="round" d="M20 11.6V21.3h6.7"/></svg>
<svg style="left:2705.5px;top:1295.5px" width="41" height="41" viewBox="0 0 24 24"><path fill="#808287" stroke="#808287" stroke-width=".35" stroke-linejoin="round" d="M19.14 12.94c.04-.3.06-.61.06-.94 0-.32-.02-.64-.07-.94l2.03-1.58c.18-.14.23-.41.12-.61l-1.92-3.32c-.12-.22-.37-.29-.59-.22l-2.39.96c-.5-.38-1.03-.7-1.62-.94l-.36-2.54c-.04-.24-.24-.41-.48-.41h-3.84c-.24 0-.43.17-.47.41l-.36 2.54c-.59.24-1.13.57-1.62.94l-2.39-.96c-.22-.08-.47 0-.59.22L2.74 8.87c-.12.21-.08.47.12.61l2.03 1.58c-.05.3-.09.63-.09.94s.02.64.07.94l-2.03 1.58c-.18.14-.23.41-.12.61l1.92 3.32c.12.22.37.29.59.22l2.39-.96c.5.38 1.03.7 1.62.94l.36 2.54c.05.24.24.41.48.41h3.84c.24 0 .44-.17.47-.41l.36-2.54c.59-.24 1.13-.56 1.62-.94l2.39.96c.22.08.47 0 .59-.22l1.92-3.32c.12-.22.07-.47-.12-.61l-2.01-1.58zM12 15.6c-1.98 0-3.6-1.62-3.6-3.6s1.62-3.6 3.6-3.6 3.6 1.62 3.6 3.6-1.62 3.6-3.6 3.6z"/></svg>
<svg style="left:2834px;top:1296px" width="40" height="40" viewBox="0 0 40 40"><g fill="none" stroke="#808287" stroke-linecap="round" stroke-linejoin="round"><path stroke-width="3.2" d="M15.4 3.6h9.2"/><path stroke-width="3.2" d="M8.6 8.4h22.8"/><path stroke-width="3.4" d="M10 9.5v21.6a2 2 0 0 0 2 2h16a2 2 0 0 0 2-2V9.5"/><path stroke-width="2.9" d="M16.4 15.4v11.2M23.6 15.4v11.2"/></g></svg>
</div></body></html>
